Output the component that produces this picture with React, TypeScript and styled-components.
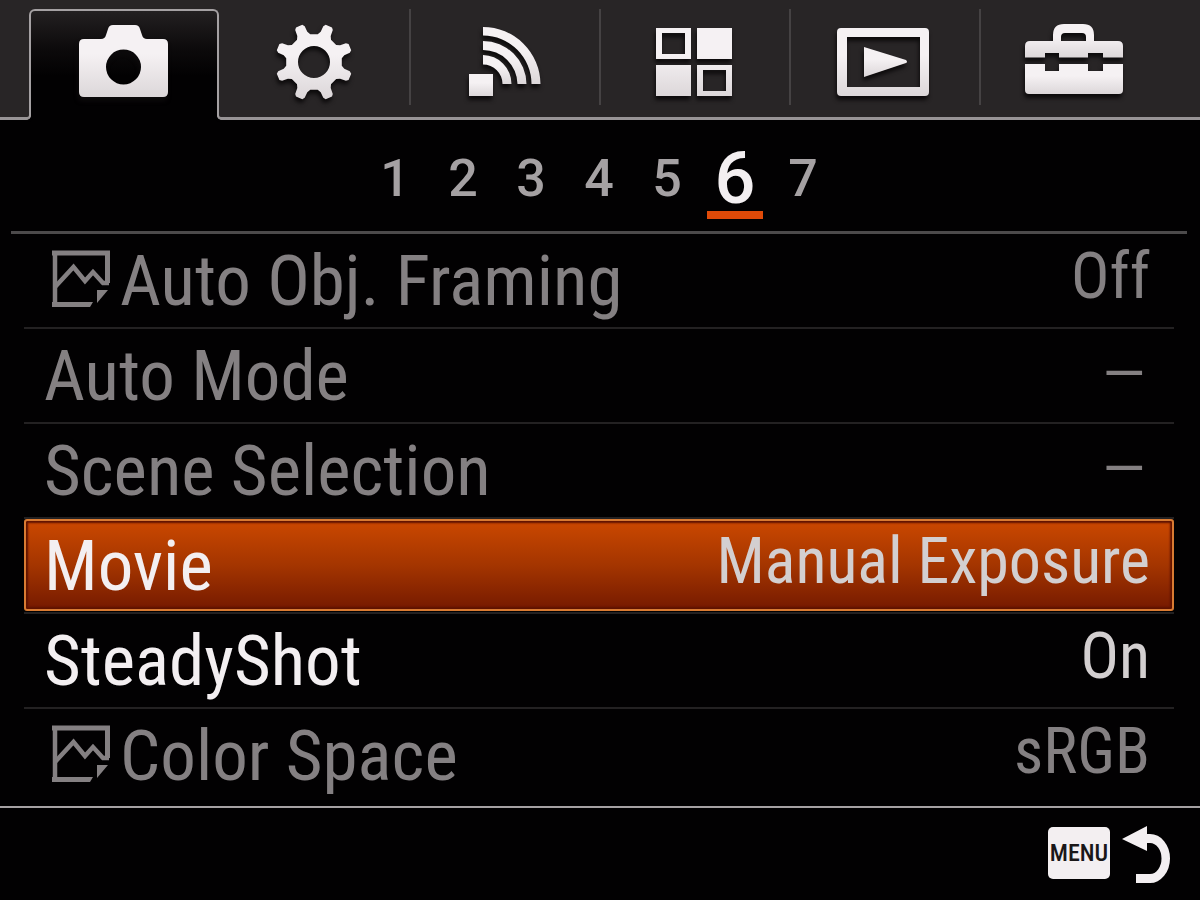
import React from "react";
import styled, { createGlobalStyle, css } from "styled-components";

const GlobalStyle = createGlobalStyle`
  *, *::before, *::after { box-sizing: border-box; }
  body {
    margin: 0;
    background: #020102;
    color: #f3eff1;
    font-family: "Roboto Condensed", "Liberation Sans", sans-serif;
  }
  button {
    margin: 0;
    padding: 0;
    border: 0;
    background: none;
    color: inherit;
    font: inherit;
    cursor: pointer;
  }
`;

const Screen = styled.div`
  display: flex;
  flex-direction: column;
  min-height: 100vh;
`;

const TabBar = styled.nav`
  display: grid;
  grid-template-columns: repeat(6, 1fr);
  height: 120px;
  padding: 9px 31px 0 29px;
  background: #282526;
  border-bottom: 3px solid #989496;
`;

const Tab = styled.button<{ $active?: boolean; $divided?: boolean }>`
  display: flex;
  align-items: flex-start;
  justify-content: center;
  padding-top: 11px;
  height: 96px;
  border-left: 2px solid ${(p) => (p.$divided ? "#454243" : "transparent")};
  border-right: 2px solid transparent;

  ${(p) =>
    p.$active &&
    css`
      position: relative;
      height: 111px;
      padding-top: 9px;
      border: 2px solid #a5a1a3;
      border-bottom: 0;
      border-radius: 6px 6px 0 0;
      background: linear-gradient(#232021, #0c0a0b 35%, #020102 60%);

      &::before,
      &::after {
        content: "";
        position: absolute;
        bottom: 0;
        width: 8px;
        height: 8px;
        border-bottom: 3px solid #989496;
      }
      &::before {
        left: -8px;
        border-right: 2px solid #a5a1a3;
        border-bottom-right-radius: 5px;
        box-shadow: 2px 2px 0 #020102;
      }
      &::after {
        right: -8px;
        border-left: 2px solid #a5a1a3;
        border-bottom-left-radius: 5px;
        box-shadow: -2px 2px 0 #020102;
      }
    `}
`;

const TabIcon = styled.svg`
  width: 112px;
  height: 88px;
  fill: url(#metal);
  filter: drop-shadow(-1px 4px 2px #0c0a0b);
`;

const Pages = styled.nav`
  display: flex;
  justify-content: center;
  height: 114px;
  margin: 0 13px 0 11px;
  padding-top: 22px;
  border-bottom: 3px solid #4c4a4b;
`;

const PageButton = styled.button<{ $active?: boolean }>`
  display: flex;
  align-items: center;
  justify-content: center;
  width: 56px;
  height: 77px;
  margin: 0 6px;
  padding-top: 4px;
  font-family: Roboto, "Liberation Sans", sans-serif;
  font-weight: 500;
  font-size: ${(p) => (p.$active ? 72 : 52)}px;
  line-height: 72px;
  color: ${(p) => (p.$active ? "#f3eff1" : "#a5a1a3")};
  border-bottom: 8px solid ${(p) => (p.$active ? "#e04a08" : "transparent")};
`;

const Settings = styled.ul`
  flex: 1;
  margin: 0;
  padding: 0 26px 0 24px;
  list-style: none;
`;

const Setting = styled.li`
  height: 95px;
  border-bottom: 2px solid #232122;

  &:last-child {
    border-bottom: 0;
  }
`;

type RowState = "off" | "on" | "selected";

const Row = styled.button<{ $state: RowState }>`
  display: flex;
  align-items: flex-start;
  justify-content: space-between;
  width: 100%;
  height: 92px;
  padding: 0 22px 0 18px;
  border: 2px solid transparent;
  border-radius: 3px;
  color: ${(p) => (p.$state === "off" ? "#848082" : "#f3eff1")};

  ${(p) =>
    p.$state === "selected" &&
    css`
      border-color: #d97b32;
      background: linear-gradient(#cb4800, #a43500 50%, #761a00);
      box-shadow: inset 0 0 2px 2px #5e1200;
    `}
`;

const Name = styled.span`
  display: flex;
  align-items: center;
  gap: 10px;
  font-size: 71px;
  line-height: 90px;
`;

const Value = styled.span<{ $state: RowState; $blank: boolean }>`
  font-size: 64px;
  line-height: 82px;
  color: ${(p) => (p.$state === "off" ? "#848082" : "#d3cfd0")};

  ${(p) =>
    p.$blank &&
    css`
      padding-right: 8px;
      font-family: "Liberation Sans", sans-serif;
      line-height: 72px;
    `}
`;

const StillIcon = styled.svg`
  width: 58px;
  height: 58px;
  margin: 0 0 4px 8px;
`;

const Footer = styled.footer`
  display: flex;
  justify-content: flex-end;
  height: 94px;
  padding: 18px 28px 0;
  border-top: 2px solid #a5a1a3;
`;

const BackButton = styled.button`
  display: flex;
  align-items: flex-start;
  gap: 12px;
`;

const MenuBadge = styled.span`
  width: 62px;
  height: 52px;
  margin-top: 1px;
  border-radius: 5px;
  background: #f3eff1;
  color: #1a1718;
  font-size: 24px;
  font-weight: 500;
  line-height: 52px;
  text-align: center;
`;

const gearPath = (cx: number, cy: number) => {
  const at = (r: number, deg: number) => {
    const a = (deg * Math.PI) / 180;
    return `${(cx + r * Math.sin(a)).toFixed(1)} ${(cy - r * Math.cos(a)).toFixed(1)}`;
  };
  const points: string[] = [];
  for (let i = 0; i < 8; i++) {
    const mid = 22.5 + i * 45;
    points.push(at(28, mid - 15), at(31, mid - 10), at(37, mid - 8), at(39, mid - 5), at(39, mid + 5), at(37, mid + 8), at(31, mid + 10), at(28, mid + 15));
  }
  const hole = `M${cx - 16} ${cy}a16 16 0 1 0 32 0a16 16 0 1 0 -32 0Z`;
  return `M${points.join("L")}Z${hole}`;
};

const tabs = [
  {
    name: "Camera settings",
    box: "68 20 112 88",
    art: (
      <path
        fillRule="evenodd"
        d="M84 39H101Q105 39 106 35L108 29Q109 25 113 25H135Q139 25 140 29L142 35Q143 39 147 39H163Q168 39 168 44V92Q168 97 163 97H84Q79 97 79 92V44Q79 39 84 39ZM106 67a17.500 17.500 0 1 0 35 0a17.500 17.500 0 1 0 -35 0Z"
      />
    ),
  },
  { name: "Custom settings", box: "258 20 112 88", art: <path fillRule="evenodd" d={gearPath(314, 62)} /> },
  {
    name: "Wireless",
    box: "448 20 112 88",
    art: (
      <>
        <path d="M483 27A57.500 57.500 0 0 1 540.500 84H531.500A48.500 48.500 0 0 0 483 35.500Z" />
        <path d="M483 41A43.500 43.500 0 0 1 526.500 84H517.500A34.500 34.500 0 0 0 483 50Z" />
        <path d="M483 55A29 29 0 0 1 511.500 84H502.500A19.500 19.500 0 0 0 483 64.500Z" />
        <path d="M469 74H493V96H469Z" />
      </>
    ),
  },
  {
    name: "Applications",
    box: "638 20 112 88",
    art: (
      <path
        fillRule="evenodd"
        d="M656 28H691V59H656ZM662 33V54H685V33ZM697 28H732V59H697ZM656 65H691V96H656ZM697 65H732V96H697ZM703 70V91H726V70Z"
      />
    ),
  },
  {
    name: "Playback",
    box: "828 20 112 88",
    art: (
      <>
        <path
          fillRule="evenodd"
          d="M841 28H925Q929 28 929 32V92Q929 96 925 96H841Q837 96 837 92V32Q837 28 841 28ZM847 37V87H920V37Z"
        />
        <path d="M864 47L906 60Q908 62 906 63L864 77Z" />
      </>
    ),
  },
  {
    name: "Setup",
    box: "1018 20 112 88",
    art: (
      <>
        <path
          fillRule="evenodd"
          d="M1030 41H1053V35Q1053 24 1064 24H1083Q1094 24 1094 35V41H1118Q1123 41 1123 46V57.500H1103V53H1088V57.500H1059V53H1045V57.500H1025V46Q1025 41 1030 41ZM1061 41H1086V37Q1086 33 1082 33H1065Q1061 33 1061 37Z"
        />
        <path d="M1025 64H1045V71H1059V64H1088V71H1103V64H1123V90Q1123 94 1119 94H1029Q1025 94 1025 90Z" />
      </>
    ),
  },
];

const settings: { name: string; value: string; state: RowState; still?: boolean }[] = [
  { name: "Auto Obj. Framing", value: "Off", state: "off", still: true },
  { name: "Auto Mode", value: "–", state: "off" },
  { name: "Scene Selection", value: "–", state: "off" },
  { name: "Movie", value: "Manual Exposure", state: "selected" },
  { name: "SteadyShot", value: "On", state: "on" },
  { name: "Color Space", value: "sRGB", state: "off", still: true },
];

export default function App() {
  return (
    <Screen>
      <GlobalStyle />
      <svg width="0" height="0" style={{ position: "absolute" }} aria-hidden="true">
        <linearGradient id="metal" x1="0" y1="0" x2="0" y2="1">
          <stop offset="0.4" stopColor="#f5f1f3" />
          <stop offset="1" stopColor="#dcd7d9" />
        </linearGradient>
      </svg>
      <TabBar>
        {tabs.map((tab, i) => (
          <Tab key={tab.name} type="button" aria-label={tab.name} $active={i === 0} $divided={i > 1}>
            <TabIcon viewBox={tab.box}>{tab.art}</TabIcon>
          </Tab>
        ))}
      </TabBar>
      <Pages>
        {[1, 2, 3, 4, 5, 6, 7].map((page) => (
          <PageButton key={page} type="button" $active={page === 6}>
            {page}
          </PageButton>
        ))}
      </Pages>
      <Settings>
        {settings.map((item) => (
          <Setting key={item.name}>
            <Row type="button" $state={item.state}>
              <Name>
                {item.still && (
                  <StillIcon viewBox="0 0 58 58" fill="none" stroke="#848082" strokeWidth="5">
                    <path d="M0 3H55.500V33" />
                    <path d="M3 3V54.500" strokeWidth="4.500" />
                    <path d="M0 52H41L38 57H0Z" fill="#848082" stroke="none" />
                    <path d="M3 37L21.500 17L33 31L41 22L51 33H57" strokeWidth="4.500" />
                    <path d="M45 40H56L45 53Z" fill="#848082" stroke="none" />
                  </StillIcon>
                )}
                {item.name}
              </Name>
              <Value $state={item.state} $blank={item.value === "–"}>
                {item.value}
              </Value>
            </Row>
          </Setting>
        ))}
      </Settings>
      <Footer>
        <BackButton type="button">
          <MenuBadge>MENU</MenuBadge>
          <svg width="50" height="60" viewBox="1122 825 50 60" fill="#f3eff1" aria-hidden="true">
            <path d="M1122 838L1147 825V833H1150A20 24.500 0 0 1 1150 882H1136V873H1150A11.500 15.500 0 0 0 1150 842H1147V850Z" />
          </svg>
        </BackButton>
      </Footer>
    </Screen>
  );
}
